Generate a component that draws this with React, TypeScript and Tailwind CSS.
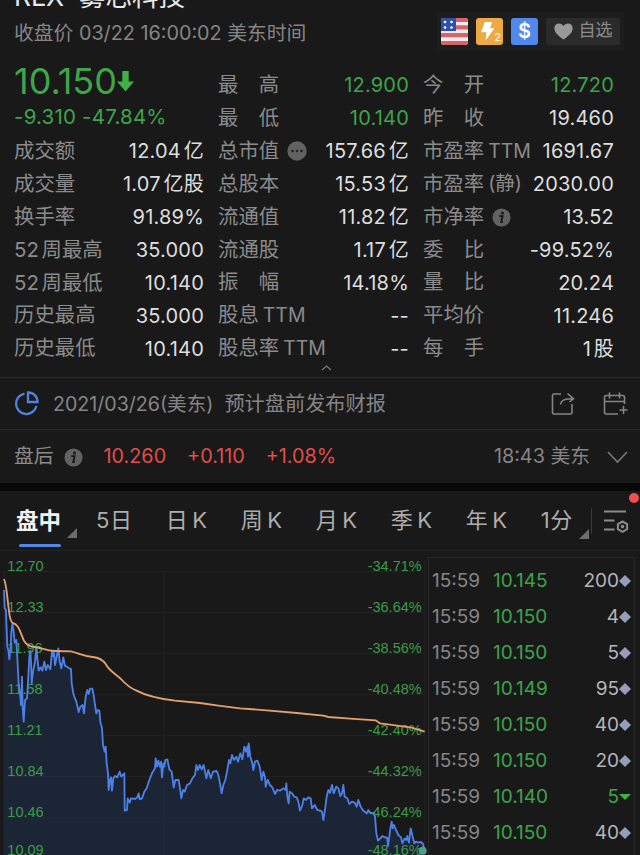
import React from 'react'

type Stat = { label: string; value: string; latin?: string; color?: string; icon?: 'more' | 'info' }

const colOne: Stat[] = [
  { label: '成交额', value: '12.04 亿' },
  { label: '成交量', value: '1.07 亿股' },
  { label: '换手率', value: '91.89%' },
  { label: '52 周最高', value: '35.000' },
  { label: '52 周最低', value: '10.140' },
  { label: '历史最高', value: '35.000' },
  { label: '历史最低', value: '10.140' },
]

const colTwo: Stat[] = [
  { label: '最　高', value: '12.900', color: 'text-[#3fa34b]' },
  { label: '最　低', value: '10.140', color: 'text-[#3fa34b]' },
  { label: '总市值', value: '157.66 亿', icon: 'more' },
  { label: '总股本', value: '15.53 亿' },
  { label: '流通值', value: '11.82 亿' },
  { label: '流通股', value: '1.17 亿' },
  { label: '振　幅', value: '14.18%' },
  { label: '股息', latin: 'TTM', value: '--' },
  { label: '股息率', latin: 'TTM', value: '--' },
]

const colThree: Stat[] = [
  { label: '今　开', value: '12.720', color: 'text-[#3fa34b]' },
  { label: '昨　收', value: '19.460' },
  { label: '市盈率', latin: 'TTM', value: '1691.67' },
  { label: '市盈率', latin: '(静)', value: '2030.00' },
  { label: '市净率', value: '13.52', icon: 'info' },
  { label: '委　比', value: '-99.52%' },
  { label: '量　比', value: '20.24' },
  { label: '平均价', value: '11.246' },
  { label: '每　手', value: '1 股' },
]

const tabs = ['5日', '日 K', '周 K', '月 K', '季 K', '年 K', '1分']

const ticks = [
  { price: '10.145', size: '200' },
  { price: '10.150', size: '4' },
  { price: '10.150', size: '5' },
  { price: '10.149', size: '95' },
  { price: '10.150', size: '40' },
  { price: '10.150', size: '20' },
  { price: '10.140', size: '5', down: true },
  { price: '10.150', size: '40' },
]

const prices = ['12.70', '12.33', '11.96', '11.58', '11.21', '10.84', '10.46', '10.09']
const percents = ['-34.71%', '-36.64%', '-38.56%', '-40.48%', '-42.40%', '-44.32%', '-46.24%', '-48.16%']

const priceLine =
  '12,120 14,175 18,180 19,215 22,290 25,300 28,328 32,290 34,245 37,222 41,245 44,278 49,270 52,325 56,400 61,440 63,465 66,380 68,470 71,515 75,450 81,445 85,380 88,320 91,302 93,335 95,400 99,365 105,335 109,292 112,325 116,362 122,352 127,362 133,335 138,360 143,345 151,358 156,305 159,318 162,308 165,345 171,315 175,295 179,335 184,355 190,322 195,348 201,350 208,356 213,356 215,400 221,435 229,455 236,486 241,470 248,465 252,490 257,440 262,420 266,432 270,416 277,416 281,435 285,465 289,490 293,480 298,482 301,515 306,535 309,585 314,605 317,590 320,640 324,670 326,720 330,690 333,682 336,722 340,685 345,678 352,682 359,665 364,680 373,670 374,782 381,780 383,745 389,758 393,745 405,747 412,742 416,730 419,748 426,745 433,725 440,715 448,690 456,670 465,655 467,625 471,650 475,632 480,650 483,635 486,682 490,640 493,650 496,630 502,628 508,658 515,665 521,713 526,690 536,690 540,715 544,745 549,720 554,725 561,705 570,700 577,685 585,675 589,645 594,660 599,645 605,658 611,645 615,665 619,685 625,660 632,685 639,665 650,663 655,675 660,700 665,730 670,705 676,690 682,660 687,630 691,640 696,615 702,630 709,620 714,635 721,610 727,628 733,590 738,605 742,590 744,620 746,580 751,620 757,640 760,660 765,635 772,632 779,650 785,690 790,665 795,680 797,710 803,690 810,705 817,712 825,732 831,720 840,722 850,715 857,720 859,700 862,740 866,760 869,725 876,730 883,740 890,742 895,755 900,782 907,765 911,745 918,750 925,742 932,745 936,775 944,765 952,780 960,782 966,785 970,810 975,780 980,740 985,720 990,728 996,705 1001,730 1009,710 1015,715 1021,738 1026,730 1030,705 1034,740 1042,745 1048,762 1056,755 1064,758 1070,770 1075,750 1082,770 1090,782 1100,790 1105,780 1112,790 1120,788 1125,800 1129,850 1134,872 1141,865 1147,858 1154,862 1161,862 1164,888 1168,860 1170,842 1175,815 1178,835 1182,825 1188,840 1195,855 1203,862 1207,880 1214,865 1219,870 1222,858 1227,878 1232,835 1238,860 1243,880 1248,875 1255,878 1263,876 1269,882 1274,905'

const averageLine =
  'M12 87 C20 105 21 140 26 175 Q30 215 38 219 C58 223 61 250 72 272 Q82 289 104 291 C130 294 135 303 165 303 L213 304 C235 309 248 318 278 321 Q305 324 317 342 C328 363 345 370 363 387 Q385 412 408 421 C445 441 485 447 525 452 L600 459 L655 467 L720 475 L800 481 L890 489 L970 497 L985 501 L1050 506 L1127 511 L1140 520 L1170 524 L1235 533 L1274 545'

function StatRow({ stat }: { stat: Stat }) {
  return (
    <div className="flex h-[32.9px] items-center justify-between whitespace-nowrap">
      <div className="flex items-center text-[20.4px] [word-spacing:-3px] text-[#8b8b8b]">
        <span>{stat.label}</span>
        {stat.latin && <span className="ml-1 text-[19.5px]">{stat.latin}</span>}
        {stat.icon === 'more' && <MoreIcon />}
        {stat.icon === 'info' && <InfoIcon className="ml-2" />}
      </div>
      <span className={`text-[20px] tracking-[0.2px] [word-spacing:-3px] ${stat.color || 'text-[#dedede]'}`}>{stat.value}</span>
    </div>
  )
}

function MoreIcon() {
  return (
    <svg className="ml-2 size-5" viewBox="0 0 20 20">
      <circle cx="10" cy="10" r="9.7" fill="#626262" />
      <g fill="#222">
        <circle cx="5.5" cy="10" r="1.3" />
        <circle cx="10" cy="10" r="1.3" />
        <circle cx="14.5" cy="10" r="1.3" />
      </g>
    </svg>
  )
}

function InfoIcon({ className = '' }: { className?: string }) {
  return (
    <svg className={`size-[19px] ${className}`} viewBox="0 0 20 20">
      <circle cx="10" cy="10" r="9.5" fill="#626262" />
      <circle cx="11" cy="5.3" r="1.6" fill="#191919" />
      <path d="M7.6 8.5h3.6l-1.5 6.3h1.8" fill="none" stroke="#191919" strokeWidth="2" />
    </svg>
  )
}

function FlagIcon() {
  return (
    <svg className="size-[27px]" viewBox="0 0 27 27">
      <defs>
        <clipPath id="flag"><rect width="27" height="27" rx="3" /></clipPath>
      </defs>
      <g clipPath="url(#flag)">
        <rect width="27" height="27" fill="#f3e9e9" />
        <path d="M0 1.8h27M0 9.4h27M0 17.2h27M0 25h27" stroke="#d3656b" strokeWidth="4.2" />
        <rect width="15" height="13" fill="#2f52a8" />
        <g fill="#fff">
          <circle cx="4" cy="4" r="1.3" />
          <circle cx="10.5" cy="4" r="1.3" />
          <circle cx="4" cy="9.5" r="1.3" />
          <circle cx="10.5" cy="9.5" r="1.3" />
        </g>
      </g>
    </svg>
  )
}

function Header() {
  return (
    <header className="h-[66px] overflow-hidden pl-3.5">
      <div className="-mt-[20px] h-[32px] text-[26.5px] leading-[32px] text-[#e8e8e8]">RLX&nbsp; 雾芯科技</div>
      <div className="flex items-start justify-between">
        <div className="mt-[7px] text-[19.8px] leading-[28px] text-[#858585]">收盘价 03/22 16:00:02 美东时间</div>
        <div className="mr-4 flex h-[38px] w-[187px] items-center gap-2 bg-[#1d1d1d] pl-1">
          <FlagIcon />
          <div className="relative size-[27px] rounded-[3px] bg-[#eda942]">
            <svg className="size-full" viewBox="0 0 27 27">
              <path d="M8.8 4h7.2l-1.8 6.300h4.300L9.500 22.500l1-8.300H5z" fill="#fff" />
            </svg>
            <span className="absolute right-[2px] bottom-[2px] text-[11px] leading-[11px] font-medium text-[#fff3d8]">2</span>
          </div>
          <div className="flex size-[27px] items-center justify-center rounded-[3px] bg-[#5288ec] text-[20px] font-semibold text-white">$</div>
          <div className="flex h-[27px] w-[74px] items-center justify-center gap-1.5 rounded-[3px] bg-[#2b2b2b]">
            <svg className="h-[17px] w-[19px]" viewBox="0 0 20 18">
              <path d="M10 17.5C3 12.5.3 9.2.3 5.5.3 2.5 2.5.5 5.2.5 7.2.5 9 1.5 10 3.2 11 1.5 12.8.5 14.8.5c2.7 0 4.9 2 4.9 5 0 3.7-2.7 7-9.7 12z" fill="#999" />
            </svg>
            <span className="text-[17px] text-[#8b8b8b]">自选</span>
          </div>
        </div>
      </div>
    </header>
  )
}

function Quote() {
  return (
    <section className="flex h-[311px] gap-3.5 pt-[3px] pl-3.5">
      <div className="w-[190px]">
        <div className="flex h-[33px] items-center">
          <span className="-mt-[10px] text-[36px] text-[#3fa648]">10.150</span>
          <svg className="-mt-[8px] h-[21px] w-[17px]" viewBox="0 0 17 21">
            <path d="M5.3 0h6.4v10.5H17L8.5 20.5 0 10.5h5.3z" fill="#3fb043" />
          </svg>
        </div>
        <div className="h-[32.8px] text-[20.5px] leading-[29px] tracking-[0.2px] whitespace-nowrap text-[#3fa34b]">-9.310 -47.84%</div>
        {colOne.map((s) => <StatRow key={s.label} stat={s} />)}
      </div>
      <div className="w-[191px]">
        {colTwo.map((s, i) => <StatRow key={i} stat={s} />)}
      </div>
      <div className="w-[191px]">
        {colThree.map((s, i) => <StatRow key={i} stat={s} />)}
      </div>
      <svg className="absolute top-[364px] left-[321px] h-[8px] w-[11px]" viewBox="0 0 11 8">
        <path d="M1 6l4.5-4L10 6" fill="none" stroke="#777" strokeWidth="1.3" />
      </svg>
    </section>
  )
}

function Earnings() {
  return (
    <section className="flex h-[52px] items-center border-t border-[#2a2a2a] pt-[2px] pr-3 pl-3.5 text-[#858585]">
      <svg className="-mt-[2px] size-[25px]" viewBox="0 0 25 25" fill="none" stroke="#5380db" strokeWidth="2.3">
        <path d="M10.5 2.6A10.3 10.3 0 1 0 22.4 15" />
        <path d="M14 1.5v9.5h9.5c0-5.5-4-9.5-9.5-9.5z" />
      </svg>
      <span className="ml-3.5 text-[19.6px]">2021/03/26(美东)</span>
      <span className="ml-[11px] text-[20.2px]">预计盘前发布财报</span>
      <div className="-mt-[2px] ml-auto flex items-center gap-[26px]">
        <svg className="size-[26px]" viewBox="0 0 26 26" fill="none" stroke="#858585" strokeWidth="1.6">
          <path d="M11 3H4Q2.500 3 2.500 4.500v17Q2.500 23 4 23h16.500Q22 23 22 21.500V13" />
          <path d="M10.500 13.500C11 9.500 14 7.800 23 7.800M17.500 2.500l6 5.300-4 3.200" />
        </svg>
        <svg className="size-[26px]" viewBox="0 0 26 26" fill="none" stroke="#858585" strokeWidth="1.6">
          <path d="M22.5 13V6Q22.5 4.5 21 4.5H4Q2.5 4.5 2.5 6v15.5Q2.5 23 4 23h12M2.5 10.5h20M7.5 1.5v6M17.5 1.500v6M17.500 19h8M21.500 15v8" />
        </svg>
      </div>
    </section>
  )
}

function AfterHours() {
  return (
    <section className="flex h-[54px] items-center border-t border-[#262626] pt-px pr-3 pl-3.5 text-[19.8px]">
      <span className="text-[#8b8b8b]">盘后</span>
      <InfoIcon className="ml-[10px]" />
      <div className="ml-[21px] flex gap-[21px] text-[#e24d4c]">
        <span>10.260</span>
        <span>+0.110</span>
        <span>+1.08%</span>
      </div>
      <span className="ml-auto text-[#858585]">18:43 美东</span>
      <svg className="ml-[17px] h-[13px] w-[21px]" viewBox="0 0 21 13">
        <path d="M1 1l9.5 10L20 1" fill="none" stroke="#777" strokeWidth="1.6" />
      </svg>
    </section>
  )
}

function Tabs() {
  return (
    <nav className="relative flex h-[60px] items-center border-b border-[#242424] text-[22px] whitespace-nowrap text-[#adadad]">
      <div className="relative ml-4 flex h-full w-[80px] items-center text-[22.5px] font-bold text-[#f2f2f2]">
        盘中
        <span className="absolute bottom-[3px] left-[3px] h-[3px] w-[42px] rounded-full bg-[#5686e5]" />
        <svg className="absolute bottom-[12px] left-[51px] size-[10px]" viewBox="0 0 10 10"><path d="M10 0v10H0z" fill="#6d6d6d" /></svg>
      </div>
      <div className="flex w-[477px] items-center justify-between tracking-[0.6px] [word-spacing:-3px]">
        {tabs.map((tab) => <span key={tab}>{tab}</span>)}
      </div>
      <svg className="mt-[26px] ml-[6px] size-[10px]" viewBox="0 0 10 10"><path d="M10 0v10H0z" fill="#6d6d6d" /></svg>
      <span className="ml-[2px] h-[26px] w-px bg-[#393939]" />
      <svg className="ml-[12px] h-[24px] w-[25px]" viewBox="0 0 25 24" fill="none" stroke="#8b8b8b" strokeWidth="2">
        <path d="M0 2.5h22M0 11.5h10.5M0 20.5h10.5" />
        <path d="M18.5 12.5l4.6 2.5v5.2l-4.6 2.6-4.6-2.6v-5.2z" />
        <circle cx="18.5" cy="17.6" r="0.8" />
      </svg>
      <span className="absolute top-[2px] right-px size-[10px] rounded-full bg-[#f04f50]" />
    </nav>
  )
}

// The chart uses three units per pixel so the price path can stay in whole numbers.
function Chart() {
  return (
    <svg className="h-[304px] w-[428px] shrink-0" viewBox="0 3 1284 912">
      <g stroke="#232323" strokeWidth="3">
        {prices.map((p, i) => <path key={p} d={`M12 ${65 + i * 123}H1274`} />)}
        <path d="M12 65V915M492 65V915M1274 30V915" />
      </g>
      <polygon points={`12,915 ${priceLine} 1274,915`} fill="#1c2535" />
      <g stroke="#222b38" strokeWidth="3">
        <path d="M12 680H320M12 803H965M492 660V915" />
      </g>
      <g fill="#3c9b49" fontSize="43.5" fontFamily="Liberation Sans, sans-serif">
        {prices.map((p, i) => <text key={p} x="22" y={i === 7 ? 915 : 62 + i * 123}>{p}</text>)}
        {percents.map((p, i) => <text key={p} x="1265" y={i === 7 ? 915 : 62 + i * 123} textAnchor="end">{p}</text>)}
      </g>
      <polyline points={priceLine} fill="none" stroke="#4d80e6" strokeWidth="5.5" strokeLinejoin="round" />
      <path d={averageLine} fill="none" stroke="#e2a06e" strokeWidth="5.5" />
      <circle cx="1268" cy="902" r="12" fill="#4ba18a" />
    </svg>
  )
}

function TickList() {
  return (
    <div className="mt-[6px] h-[310px] w-[207px] border-x border-t border-[#2a2a2a] pt-[5px] pr-[3px] pl-[3px]">
      {ticks.map((t, i) => (
        <div key={i} className="flex h-[36px] items-center text-[19px]">
          <span className="w-[61px] text-[#858585]">15:59</span>
          <span className="text-[#3fa34b]">{t.price}</span>
          <span className={`ml-auto ${t.down ? 'text-[#3fa34b]' : 'text-[#b5b5b8]'}`}>{t.size}</span>
          <svg className="size-[12px]" viewBox="0 0 12 12">
            {t.down ? <path d="M0 3h12L6 9z" fill="#3fb043" /> : <path d="M6 0l6 6-6 6-6-6z" fill="#969db9" />}
          </svg>
        </div>
      ))}
    </div>
  )
}

export default function App() {
  return (
    <main className="relative flex h-[855px] w-[640px] flex-col overflow-hidden bg-[#191919] font-['Inter','Noto_Sans_CJK_SC',sans-serif]">
      <Header />
      <Quote />
      <Earnings />
      <AfterHours />
      <div className="h-2 shrink-0 bg-[#080808]" />
      <Tabs />
      <div className="flex h-[304px]">
        <Chart />
        <TickList />
      </div>
    </main>
  )
}
